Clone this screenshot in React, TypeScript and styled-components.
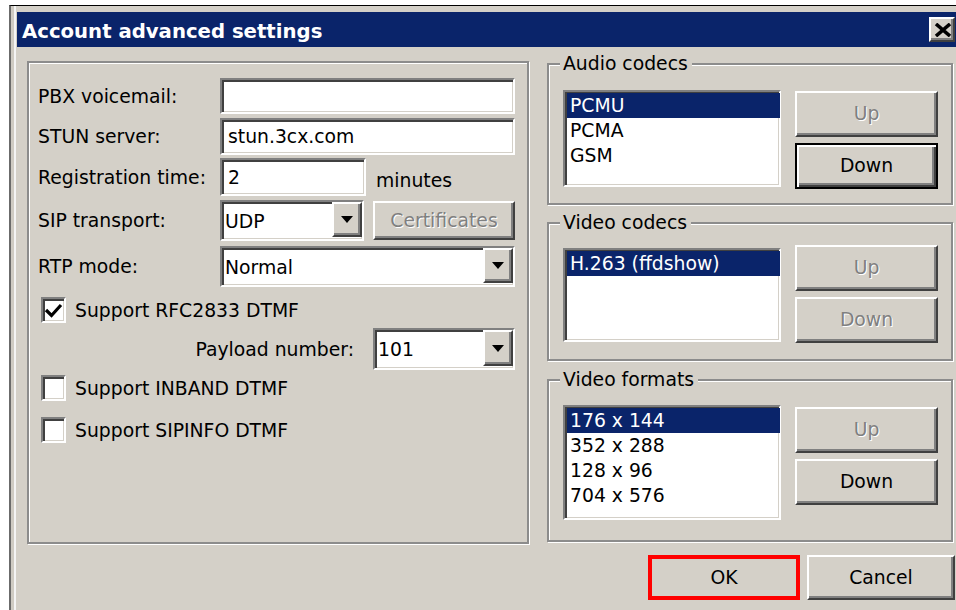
import React from "react";
import styled, { createGlobalStyle, css } from "styled-components";

const FACE = "#D4D0C8";
const NAVY = "#0A246A";
const FONT = `"DejaVu Sans", Verdana, sans-serif`;

const GlobalStyle = createGlobalStyle`
  html, body { margin: 0; padding: 0; background: #ffffff; overflow: hidden; }
  body { width: 956px; height: 610px; font-family: ${FONT}; font-size: 18.8px; color: #000; }
  * { box-sizing: border-box; }
`;

const raised = css`
  border: 2px solid;
  border-color: #ffffff #404040 #404040 #ffffff;
  box-shadow: inset -2px -2px 0 #808080;
  background: ${FACE};
`;

const sunken = css`
  border: 2px solid;
  border-color: #808080 #ffffff #ffffff #808080;
  box-shadow: inset 2px 2px 0 #404040, inset -1px -1px 0 ${FACE};
  background: #ffffff;
`;

/* ---------- window chrome ---------- */

const Frame = styled.div`
  margin: 5px 0 0 9px;
  width: 957px;
  height: 620px;
  background: ${FACE};
  border-top: 1px solid #000;
  border-left: 2px solid #6b6b6b;
  padding: 6px 6px 0 6px;
  box-shadow: inset 3px 0 0 #cfcbc3, inset 5px 0 0 #f4f4f4;
`;

const TitleBar = styled.div`
  height: 35px;
  background: ${NAVY};
  display: flex;
  align-items: center;
  justify-content: space-between;
  padding: 0 5px 0 5px;
`;

const Title = styled.span`
  color: #ffffff;
  font-family: ${FONT};
  font-weight: bold;
  font-size: 19.7px;
  padding-top: 3px;
`;

const CloseButton = styled.div`
  ${raised};
  width: 26px;
  height: 25px;
  display: flex;
  align-items: center;
  justify-content: center;
  padding: 1px 0 1px 1px;
`;

const Content = styled.div`
  display: flex;
  flex-direction: column;
  padding: 14px 0 0 10px;
`;

const MainRow = styled.div`
  display: flex;
  align-items: flex-start;
  gap: 18px;
`;

/* ---------- etched group boxes ---------- */

const etched = css`
  border: 2px solid #8c8c8c;
  box-shadow: inset 1px 1px 0 #ffffff, 1px 1px 0 #ffffff;
`;

const Panel = styled.div`
  ${etched};
  width: 502px;
  height: 483px;
  padding: 15px 12px 0 9px;
  display: flex;
  flex-direction: column;
`;

const RightColumn = styled.div`
  width: 406px;
  margin-top: 2px;
  display: flex;
  flex-direction: column;
`;

const Group = styled.div<{ $h: number; $mt: number }>`
  ${etched};
  position: relative;
  height: ${(p) => p.$h}px;
  margin-top: ${(p) => p.$mt}px;
  padding: 0 0 0 14px;
  display: flex;
  align-items: flex-start;
  gap: 14px;
`;

const GroupLabel = styled.span`
  position: absolute;
  top: -12px;
  left: 11px;
  padding: 0 4px 0 3px;
  background: ${FACE};
  line-height: 22px;
`;

/* ---------- list boxes ---------- */

const ListBox = styled.div<{ $h: number; $mt: number }>`
  ${sunken};
  width: 218px;
  height: ${(p) => p.$h}px;
  margin-top: ${(p) => p.$mt}px;
  padding: 1px 0 0 2px;
`;

const ListItem = styled.div<{ $selected?: boolean }>`
  height: 25px;
  line-height: 26px;
  padding-left: 3px;
  margin-right: -1px;
  background: ${(p) => (p.$selected ? NAVY : "transparent")};
  color: ${(p) => (p.$selected ? "#ffffff" : "#000")};
  white-space: nowrap;
`;

const ButtonStack = styled.div<{ $mt: number }>`
  display: flex;
  flex-direction: column;
  gap: 6px;
  margin-top: ${(p) => p.$mt}px;
`;

/* ---------- push buttons ---------- */

const PushButton = styled.div<{ $w: number; $h?: number; $disabled?: boolean; $default?: boolean }>`
  ${raised};
  width: ${(p) => p.$w}px;
  height: ${(p) => p.$h ?? 45}px;
  display: flex;
  align-items: center;
  justify-content: center;
  padding-bottom: 1px;
  color: ${(p) => (p.$disabled ? "#808080" : "#000")};
  text-shadow: ${(p) => (p.$disabled ? "1px 1px 0 #ffffff" : "none")};
  ${(p) =>
    p.$default &&
    css`
      border-color: #000;
      box-shadow: inset 2px 2px 0 #ffffff, inset -2px -2px 0 #404040, inset -4px -4px 0 #808080;
    `}
`;

const MarkedButton = styled(PushButton)`
  outline: 4px solid #ff0000;
  outline-offset: -4px;
`;

const ButtonRow = styled.div`
  display: flex;
  justify-content: flex-end;
  gap: 7px;
  margin-top: 11px;
  padding-right: 5px;
`;

/* ---------- form controls ---------- */

const FormRow = styled.div<{ $mt?: number; $end?: boolean }>`
  display: flex;
  align-items: center;
  margin-top: ${(p) => p.$mt ?? 0}px;
  justify-content: ${(p) => (p.$end ? "flex-end" : "flex-start")};
  gap: ${(p) => (p.$end ? "19px" : "0")};
`;

const Label = styled.span`
  width: 182px;
  flex: none;
  white-space: nowrap;
`;

const PlainLabel = styled.span`
  white-space: nowrap;
`;

const TextBox = styled.div<{ $w: number; $h: number }>`
  ${sunken};
  width: ${(p) => p.$w}px;
  height: ${(p) => p.$h}px;
  padding-left: 6px;
  display: flex;
  align-items: center;
  white-space: nowrap;
`;

const Suffix = styled.span`
  margin-left: 10px;
  padding-top: 6px;
`;

const Combo = styled.div<{ $w: number; $h: number }>`
  ${sunken};
  width: ${(p) => p.$w}px;
  height: ${(p) => p.$h}px;
  display: flex;
  align-items: stretch;
  padding: 0 0 2px 3px;
`;

const ComboText = styled.span`
  flex: 1;
  display: flex;
  align-items: center;
  padding-top: 3px;
`;

const DropButton = styled.div`
  ${raised};
  width: 30px;
  flex: none;
  display: flex;
  align-items: center;
  justify-content: center;
`;

const CheckRow = styled.div<{ $mt: number }>`
  display: flex;
  align-items: center;
  gap: 9px;
  padding-left: 3px;
  margin-top: ${(p) => p.$mt}px;
`;

const CheckBox = styled.div`
  ${sunken};
  width: 25px;
  height: 26px;
  display: flex;
  align-items: center;
  justify-content: center;
`;

const Arrow = () => (
  <svg width="12" height="7" viewBox="0 0 12 7">
    <polygon points="0,0 12,0 6,7" fill="#000" />
  </svg>
);

const CheckMark = () => (
  <svg width="19" height="19" viewBox="0 0 19 19">
    <polyline points="2,9 7.5,14.5 17,4" fill="none" stroke="#000" strokeWidth="3.2" />
  </svg>
);

const CloseGlyph = () => (
  <svg width="18" height="14" viewBox="0 0 18 14">
    <path d="M2 1 L16 13 M16 1 L2 13" stroke="#000" strokeWidth="3.6" fill="none" />
  </svg>
);

function Dropdown({ value, w, h }: { value: string; w: number; h: number }) {
  return (
    <Combo $w={w} $h={h}>
      <ComboText>{value}</ComboText>
      <DropButton>
        <Arrow />
      </DropButton>
    </Combo>
  );
}

function Check({ checked, label, mt }: { checked?: boolean; label: string; mt: number }) {
  return (
    <CheckRow $mt={mt}>
      <CheckBox>{checked && <CheckMark />}</CheckBox>
      <PlainLabel>{label}</PlainLabel>
    </CheckRow>
  );
}

type CodecGroupProps = {
  title: string;
  items: string[];
  h: number;
  mt: number;
  listH: number;
  listTop: number;
  btnTop: number;
  upDisabled?: boolean;
  downDisabled?: boolean;
  downDefault?: boolean;
};

function CodecGroup(p: CodecGroupProps) {
  return (
    <Group $h={p.h} $mt={p.mt}>
      <GroupLabel>{p.title}</GroupLabel>
      <ListBox $h={p.listH} $mt={p.listTop}>
        {p.items.map((it, i) => (
          <ListItem key={it} $selected={i === 0}>
            {it}
          </ListItem>
        ))}
      </ListBox>
      <ButtonStack $mt={p.btnTop}>
        <PushButton $w={143} $h={46} $disabled={p.upDisabled}>
          Up
        </PushButton>
        <PushButton $w={143} $h={46} $disabled={p.downDisabled} $default={p.downDefault}>
          Down
        </PushButton>
      </ButtonStack>
    </Group>
  );
}

export default function App() {
  return (
    <>
      <GlobalStyle />
      <Frame>
        <TitleBar>
          <Title>Account advanced settings</Title>
          <CloseButton>
            <CloseGlyph />
          </CloseButton>
        </TitleBar>
        <Content>
          <MainRow>
            <Panel>
              <FormRow>
                <Label>PBX voicemail:</Label>
                <TextBox $w={295} $h={36} />
              </FormRow>
              <FormRow $mt={4}>
                <Label>STUN server:</Label>
                <TextBox $w={295} $h={37}>stun.3cx.com</TextBox>
              </FormRow>
              <FormRow $mt={3}>
                <Label>Registration time:</Label>
                <TextBox $w={146} $h={38}>2</TextBox>
                <Suffix>minutes</Suffix>
              </FormRow>
              <FormRow $mt={4}>
                <Label>SIP transport:</Label>
                <Dropdown value="UDP" w={145} h={41} />
                <PushButton $w={143} $h={39} $disabled style={{ marginLeft: 9 }}>
                  Certificates
                </PushButton>
              </FormRow>
              <FormRow $mt={5}>
                <Label>RTP mode:</Label>
                <Dropdown value="Normal" w={295} h={41} />
              </FormRow>
              <Check checked label="Support RFC2833 DTMF" mt={10} />
              <FormRow $mt={5} $end>
                <PlainLabel>Payload number:</PlainLabel>
                <Dropdown value="101" w={142} h={42} />
              </FormRow>
              <Check label="Support INBAND DTMF" mt={5} />
              <Check label="Support SIPINFO DTMF" mt={16} />
            </Panel>
            <RightColumn>
              <CodecGroup
                title="Audio codecs"
                items={["PCMU", "PCMA", "GSM"]}
                h={142}
                mt={0}
                listH={97}
                listTop={25}
                btnTop={26}
                upDisabled
                downDefault
              />
              <CodecGroup
                title="Video codecs"
                items={["H.263 (ffdshow)"]}
                h={139}
                mt={17}
                listH={94}
                listTop={24}
                btnTop={21}
                upDisabled
                downDisabled
              />
              <CodecGroup
                title="Video formats"
                items={["176 x 144", "352 x 288", "128 x 96", "704 x 576"]}
                h={163}
                mt={18}
                listH={115}
                listTop={24}
                btnTop={26}
                upDisabled
              />
            </RightColumn>
          </MainRow>
          <ButtonRow>
            <MarkedButton $w={152}>OK</MarkedButton>
            <PushButton $w={148}>Cancel</PushButton>
          </ButtonRow>
        </Content>
      </Frame>
    </>
  );
}
